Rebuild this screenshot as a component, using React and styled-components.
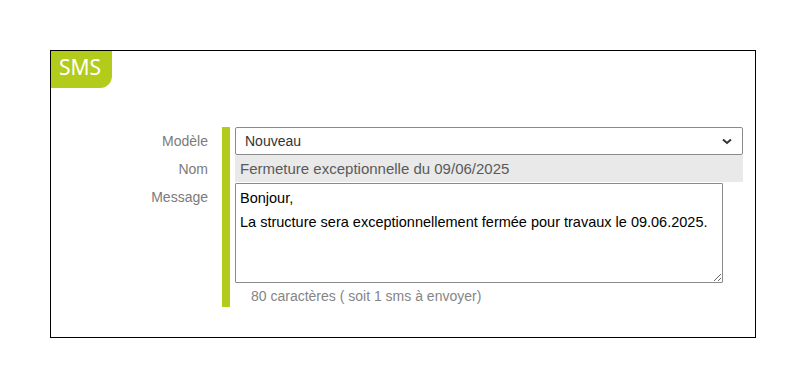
import styled, { createGlobalStyle } from 'styled-components'

const Global = createGlobalStyle`
    body{
        margin: 0;
        background: #fff;
        font-family: "Liberation Sans", Arial, sans-serif;
    }
`;

const Page = styled.div`
    padding: 50px;
`;

const Box = styled.div`
    box-sizing: border-box;
    width: 706px;
    height: 288px;
    border: 1px solid #000;
`;

const Badge = styled.div`
    width: 61px;
    height: 37px;
    background: #b3cb1b;
    color: #fff;
    font-family: "Noto Sans", sans-serif;
    font-size: 21px;
    line-height: 33px;
    padding-left: 8px;
    box-sizing: border-box;
    border-bottom-right-radius: 12px;
`;

const Body = styled.div`
    display: flex;
    gap: 14px;
    margin-top: 39px;
`;

const Labels = styled.div`
    width: 157px;
    display: flex;
    flex-direction: column;
    align-items: flex-end;
`;

const Label = styled.div`
    height: ${p => p.h}px;
    line-height: ${p => p.h}px;
    color: #7b7b7b;
    font-size: 14px;
`;

const Panel = styled.div`
    border-left: 8px solid #b3cb1b;
    padding-left: 5px;
    width: 508px;
    height: 180px;
`;

const Select = styled.div`
    box-sizing: border-box;
    height: 28px;
    border: 1px solid #8a8a8a;
    border-radius: 2px;
    display: flex;
    align-items: center;
    justify-content: space-between;
    padding: 0 10px 0 9px;
    color: #333;
    font-size: 14px;
`;

const Readonly = styled.div`
    height: 27px;
    background: #e9e9e9;
    color: #5a5a5a;
    font-size: 15px;
    line-height: 27px;
    padding-left: 5px;
`;

const Message = styled.textarea`
    display: block;
    box-sizing: border-box;
    margin-top: 1px;
    width: 488px;
    height: 100px;
    border: 1px solid #8a8a8a;
    border-radius: 1px;
    padding: 2px 4px;
    font-family: "Liberation Sans", Arial, sans-serif;
    font-size: 14.5px;
    line-height: 24px;
    color: #000;
    outline: none;
`;

const Counter = styled.div`
    padding-left: 16px;
    margin-top: 5px;
    color: #858585;
    font-size: 14px;
`;

function Chevron(){
    return(
        <svg width="10" height="7" viewBox="0 0 10 7">
            <path d="M1 1.5 L5 5 L9 1.5" fill="none" stroke="#333" strokeWidth="2"/>
        </svg>
    )
}

export default function App(){
    return(
        <Page>
            <Global/>
            <Box>
                <Badge>SMS</Badge>
                <Body>
                    <Labels>
                        <Label h={29}>Modèle</Label>
                        <Label h={27}>Nom</Label>
                        <Label h={28}>Message</Label>
                    </Labels>
                    <Panel>
                        <Select>
                            <span>Nouveau</span>
                            <Chevron/>
                        </Select>
                        <Readonly>Fermeture exceptionnelle du 09/06/2025</Readonly>
                        <Message defaultValue={"Bonjour,\nLa structure sera exceptionnellement fermée pour travaux le 09.06.2025."}/>
                        <Counter>80 caractères ( soit 1 sms à envoyer)</Counter>
                    </Panel>
                </Body>
            </Box>
        </Page>
    )
}
